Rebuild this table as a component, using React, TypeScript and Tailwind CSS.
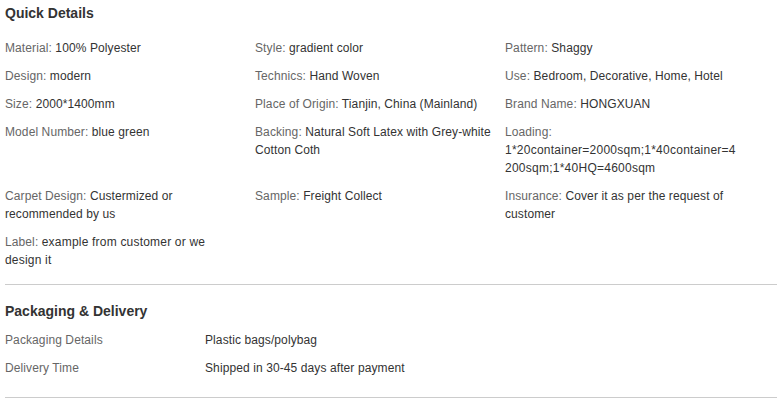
import React from "react";

const details: [string, string][] = [
  ["Material", "100% Polyester"],
  ["Style", "gradient color"],
  ["Pattern", "Shaggy"],
  ["Design", "modern"],
  ["Technics", "Hand Woven"],
  ["Use", "Bedroom, Decorative, Home, Hotel"],
  ["Size", "2000*1400mm"],
  ["Place of Origin", "Tianjin, China (Mainland)"],
  ["Brand Name", "HONGXUAN"],
  ["Model Number", "blue green"],
  ["Backing", "Natural Soft Latex with Grey-white Cotton Coth"],
  ["Loading", "1*20container=2000sqm;1*40container=4200sqm;1*40HQ=4600sqm"],
  ["Carpet Design", "Custermized or recommended by us"],
  ["Sample", "Freight Collect"],
  ["Insurance", "Cover it as per the request of customer"],
  ["Label", "example from customer or we design it"],
];

const packaging: [string, string][] = [
  ["Packaging Details", "Plastic bags/polybag"],
  ["Delivery Time", "Shipped in 30-45 days after payment"],
];

// slightly wider spacing where the original's hinted Arial wraps earlier
const wide: Record<string, string> = {
  Loading: "tracking-[0.25px]",
  Label: "tracking-[0.2px]",
};

const App = () => {
  return (
    <div
      className="w-[782px] h-[409px] bg-white pl-[5px] text-[12px] leading-[18px] tracking-[0.1px]"
      style={{ fontFamily: '"Liberation Sans", Arial, sans-serif' }}
    >
      <div className="w-[772px] border-b border-[#cccccc] pb-[5px]">
        <h3 className="pt-[4px] mb-[17px] text-[14px] leading-[18px] font-bold text-[#333333] tracking-normal">
          Quick Details
        </h3>
        <div className="grid grid-cols-[250px_250px_250px]">
          {details.map(([k, v]) => (
            <div key={k} className="pr-[13px] mb-[10px] break-words">
              <span className="text-[#666666]">{k}: </span>
              <span className={`text-[#333333] ${wide[k] ?? ""}`}>{v}</span>
            </div>
          ))}
        </div>
      </div>
      <div className="w-[772px] border-b border-[#cccccc] pb-[10px]">
        <h3 className="pt-[17px] mb-[11px] text-[14px] leading-[18px] font-bold text-[#333333] tracking-normal">
          Packaging &amp; Delivery
        </h3>
        {packaging.map(([k, v]) => (
          <div key={k} className="grid grid-cols-[200px_1fr] mb-[10px]">
            <span className="text-[#666666]">{k}</span>
            <span className="text-[#333333]">{v}</span>
          </div>
        ))}
      </div>
    </div>
  );
};

export default App;
